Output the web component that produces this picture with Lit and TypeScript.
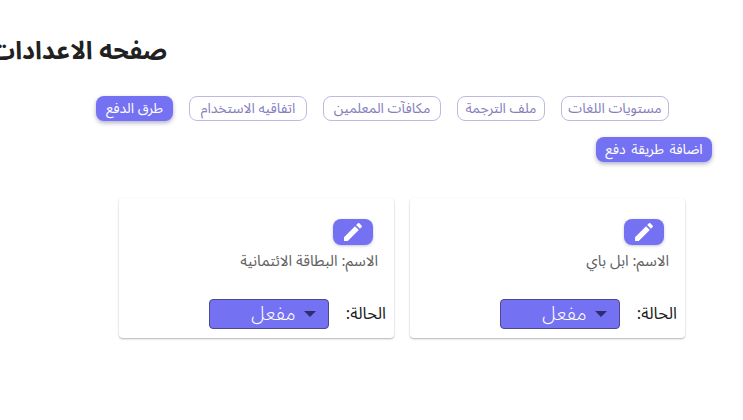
import { LitElement, html, css } from 'lit';
import { customElement } from 'lit/decorators.js';

const editIcon = html`<svg width="24" height="24" viewBox="0 0 24 24" fill="#fff">
  <path d="M3 17.25V21h3.75L17.81 9.94l-3.75-3.75L3 17.25zM20.71 7.04c.39-.39.39-1.02 0-1.41l-2.34-2.34c-.39-.39-1.02-.39-1.41 0l-1.83 1.83 3.75 3.75 1.83-1.83z"/>
</svg>`;

@customElement('app-root')
export class AppRoot extends LitElement {
  static styles = css`
    :host {
      display: block;
      width: 743px;
      height: 420px;
      overflow: hidden;
      background: #fff;
      font-family: 'Noto Sans Arabic', 'Noto Sans', 'DejaVu Sans', sans-serif;
    }
    .page {
      direction: rtl;
      padding-top: 35px;
    }
    h1 {
      margin: 0 576px 0 0;
      font-size: 25px;
      line-height: 32px;
      font-weight: 700;
      color: #212121;
      white-space: nowrap;
    }
    .tabs {
      display: flex;
      gap: 16px;
      margin: 29px 74px 0 0;
    }
    .tab {
      box-sizing: border-box;
      height: 25px;
      display: flex;
      align-items: center;
      justify-content: center;
      border: 1px solid #bdb9e0;
      border-radius: 8px;
      font-size: 14px;
      color: #8580bd;
      white-space: nowrap;
    }
    .tab.active,
    .add {
      border: none;
      background: #7471f2;
      color: #fff;
      box-shadow: 0 2px 4px rgba(60, 60, 120, 0.4);
    }
    .add {
      box-sizing: border-box;
      width: 116px;
      height: 25px;
      margin: 16px 31px 0 0;
      display: flex;
      align-items: center;
      justify-content: center;
      border-radius: 8px;
      font-size: 14px;
      word-spacing: 2px;
      white-space: nowrap;
    }
    .cards {
      display: flex;
      gap: 16px;
      margin: 36px 58px 0 0;
    }
    .card {
      box-sizing: border-box;
      width: 275px;
      height: 140px;
      padding: 21px 16px 0 8px;
      border-radius: 4px;
      box-shadow: 0 1px 2px rgba(0, 0, 0, 0.3);
    }
    .edit {
      width: 40px;
      height: 26px;
      margin-right: 5px;
      display: flex;
      align-items: center;
      justify-content: center;
      border-radius: 8px;
      background: #7471f2;
      box-shadow: 0 1px 3px rgba(60, 60, 120, 0.3);
    }
    .name {
      margin-top: 6px;
      font-size: 15px;
      line-height: 20px;
      color: #616161;
      white-space: nowrap;
    }
    .status {
      display: flex;
      align-items: center;
      gap: 17px;
      margin: 25px -8px 0 0;
      font-size: 16.5px;
      color: #212121;
    }
    .select {
      box-sizing: border-box;
      width: 120px;
      height: 30px;
      display: flex;
      align-items: center;
      gap: 8px;
      padding-right: 12px;
      border: 1px solid #4b4a8f;
      border-radius: 4px;
      background: #7471f2;
      color: #fff;
      font-size: 20px;
      font-weight: 300;
    }
    .caret {
      width: 0;
      height: 0;
      border-left: 6px solid transparent;
      border-right: 6px solid transparent;
      border-top: 6px solid #2f2e6b;
    }
  `;

  tabs = [
    { label: 'مستويات اللغات', width: 108 },
    { label: 'ملف الترجمة', width: 88 },
    { label: 'مكافآت المعلمين', width: 118 },
    { label: 'اتفاقيه الاستخدام', width: 118 },
    { label: 'طرق الدفع', width: 77 },
  ];
  cards = ['ابل باي', 'البطاقة الائتمانية'];

  render() {
    return html`<div class="page">
      <h1>صفحه الاعدادات</h1>
      <div class="tabs">
        ${this.tabs.map(
          (t, i) => html`<div class="tab ${i === 4 ? 'active' : ''}" style="width:${t.width}px">${t.label}</div>`
        )}
      </div>
      <div class="add">اضافة طريقة دفع</div>
      <div class="cards">
        ${this.cards.map(
          c => html`<div class="card">
            <div class="edit">${editIcon}</div>
            <div class="name">الاسم: ${c}</div>
            <div class="status">
              <span>الحالة:</span>
              <div class="select"><span class="caret"></span><span>مفعل</span></div>
            </div>
          </div>`
        )}
      </div>
    </div>`;
  }
}
